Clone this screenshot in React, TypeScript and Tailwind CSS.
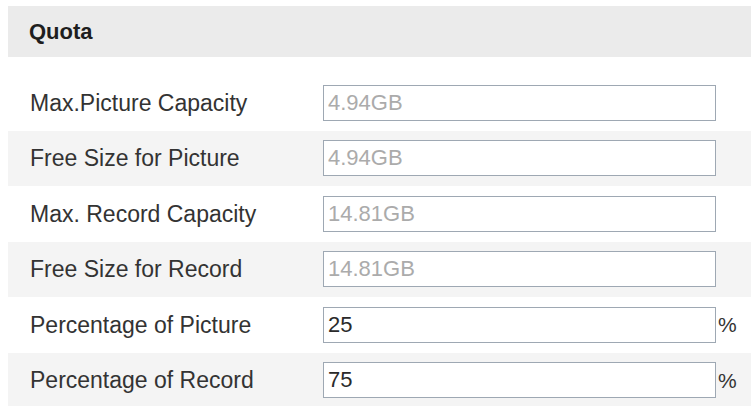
const ROWS: { label: string; value: string; editable: boolean }[] = [
  { label: 'Max.Picture Capacity', value: '4.94GB', editable: false },
  { label: 'Free Size for Picture', value: '4.94GB', editable: false },
  { label: 'Max. Record Capacity', value: '14.81GB', editable: false },
  { label: 'Free Size for Record', value: '14.81GB', editable: false },
  { label: 'Percentage of Picture', value: '25', editable: true },
  { label: 'Percentage of Record', value: '75', editable: true },
];

export default function App() {
  return (
    <div className="w-[751px] h-[406px] overflow-hidden bg-white pt-[6px] pl-[8px] font-['Liberation_Sans',Arial,sans-serif]">
      {/* Section header */}
      <div className="h-[51px] bg-[#ebebeb] flex items-center pl-[21px] text-[22px] font-bold text-[#1e1e1e]">
        Quota
      </div>

      {/* Fields */}
      <div className="mt-[18px]">
        {ROWS.map((row, i) => (
          <div
            key={row.label}
            className={`h-[55.5px] flex items-center pl-[22px] ${i % 2 === 1 ? 'bg-[#f4f4f4]' : 'bg-white'}`}
          >
            <div className="w-[293px] text-[23px] text-[#333]">{row.label}</div>
            <input
              type="text"
              value={row.value}
              readOnly
              disabled={!row.editable}
              className={`w-[393px] h-[36px] border border-[#9ea8b3] bg-white px-[4px] text-[22px] outline-none ${
                row.editable ? 'text-[#2a2a2a]' : 'text-[#ababab]'
              }`}
            />
            {row.editable && <span className="ml-[2px] text-[21px] text-[#333]">%</span>}
          </div>
        ))}
      </div>
    </div>
  );
}
